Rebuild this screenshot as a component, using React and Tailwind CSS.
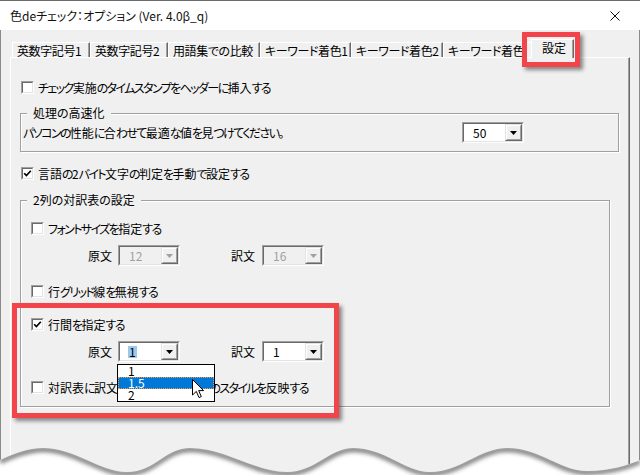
import React from 'react';

const FONT = "font-['Noto_Sans_CJK_JP','Liberation_Sans',sans-serif] [font-feature-settings:'palt']";

// MS UI Gothic draws kana narrower than Noto, so tighten only the kana runs
const KANA = /([\u3040-\u30ff\u3000-\u303f]+)/;
function Jp({ text }) {
  return text.split(KANA).map((part, i) =>
    KANA.test(part) ? (
      <span key={i} className="tracking-[-1.6px]">
        {part}
      </span>
    ) : (
      part
    )
  );
}

function CheckBox({ checked }) {
  return (
    <div className="w-[13px] h-[13px] shrink-0 border border-t-[#a0a0a0] border-l-[#a0a0a0] border-r-white border-b-white">
      <div className="w-full h-full bg-white border border-t-[#696969] border-l-[#696969] border-r-[#e3e3e3] border-b-[#e3e3e3] flex items-center justify-center">
        {checked && (
          <svg width="9" height="9" viewBox="0 0 9 9">
            <path d="M1.2 4.2 L3.4 6.6 L7.8 1.8" stroke="#000" strokeWidth="1.7" fill="none" />
          </svg>
        )}
      </div>
    </div>
  );
}

function CheckRow({ checked, label, className }) {
  return (
    <div className={`flex items-center gap-[4px] h-[13px] leading-[13px] ${className}`}>
      <CheckBox checked={checked} />
      <span className="whitespace-pre">
        <Jp text={label} />
      </span>
    </div>
  );
}

function Combo({ value, disabled, selected, children, className = '' }) {
  return (
    <div className={`relative w-[62px] h-[21px] shrink-0 border border-t-[#a0a0a0] border-l-[#a0a0a0] border-r-white border-b-white ${className}`}>
      <div
        className={`w-full h-full flex border border-t-[#696969] border-l-[#696969] border-r-[#e3e3e3] border-b-[#e3e3e3] ${
          disabled ? 'bg-[#f0f0f0]' : 'bg-white'
        }`}
      >
        <div className="flex-1 flex items-center pl-[8px]">
          <span
            className={`leading-[12px] px-[1px] ${disabled ? 'text-[#a0a0a0]' : 'text-black'} ${
              selected ? 'bg-[#99c9ef]' : ''
            }`}
          >
            {value}
          </span>
        </div>
        <div className="w-[17px] h-full border border-t-[#e3e3e3] border-l-[#e3e3e3] border-r-[#696969] border-b-[#696969]">
          <div className="w-full h-full bg-[#f0f0f0] border border-t-white border-l-white border-r-[#a0a0a0] border-b-[#a0a0a0] flex items-center justify-center">
            <svg width="7" height="4" viewBox="0 0 7 4">
              <path d="M0 0 H7 L3.5 4 Z" fill={disabled ? '#a0a0a0' : '#000'} />
            </svg>
          </div>
        </div>
      </div>
      {children}
    </div>
  );
}

function Tab({ label, w, clip }) {
  return (
    <div
      className="h-[15px] shrink-0 flex items-center pl-[4px] tracking-[-0.4px] border-t border-l border-white border-r border-r-[#696969] shadow-[inset_-1px_0_0_#a0a0a0] leading-[13px] whitespace-nowrap"
      style={{ width: w }}
    >
      {clip ? <span className="w-[75px] overflow-hidden">{label}</span> : label}
    </div>
  );
}

function Group({ legend, className, children }) {
  return (
    <div className={`border border-[#a0a0a0] shadow-[1px_1px_0_#fff,inset_1px_1px_0_#fff] ${className}`}>
      <div className="-mt-[8px] ml-[6px] px-[6px] w-fit h-[14px] leading-[14px] bg-[#f0f0f0]">{legend}</div>
      {children}
    </div>
  );
}

function RowPair({ left, right }) {
  return (
    <div className="flex items-center h-[21px]">
      <span className="ml-[67px] w-[24px] whitespace-nowrap">原文</span>
      <div className="ml-[6px]">{left}</div>
      <span className="ml-[51px] w-[24px] whitespace-nowrap">訳文</span>
      <div className="ml-[7px]">{right}</div>
    </div>
  );
}

export default function App() {
  return (
    <div className={`relative w-[640px] h-[475px] overflow-hidden bg-[#f0f0f0] text-[12px] text-black ${FONT}`}>
      {/* title bar */}
      <div className="h-[30px] bg-white border-t border-[#6b6b6b] flex items-center justify-between pl-[10px] pr-[20px]">
        <span className="text-[12px] leading-[14px] text-[#111]">色deチェック：オプション (Ver. 4.0β_q)</span>
        <svg width="10" height="10" viewBox="0 0 10 10">
          <path d="M0.5 0.5 L9.5 9.5 M9.5 0.5 L0.5 9.5" stroke="#111" strokeWidth="1" />
        </svg>
      </div>

      {/* body */}
      <div className="h-[445px] flex flex-col border-l border-r border-[#8a8a8a]">
        {/* tabs */}
        <div className="h-[27px] flex items-end pl-[11px]">
          <Tab label="英数字記号1" w={78} />
          <Tab label="英数字記号2" w={78} />
          <Tab label="用語集での比較" w={92} />
          <Tab label="キーワード着色1" w={91} />
          <Tab label="キーワード着色2" w={92} />
          <Tab label="キーワード着色3" w={90} clip />
          <div className="relative z-10 -mb-[1px] -ml-[2px] w-[43px] h-[19px] bg-[#f0f0f0] flex items-center pl-[10px] pb-[2px] border-t border-l border-white border-r border-r-[#696969] shadow-[inset_-1px_0_0_#a0a0a0]">
            設定
          </div>
        </div>

        {/* panel */}
        <div className="flex-1 ml-[9px] mr-[9px] border border-t-white border-l-white border-r-[#696969] border-b-[#696969] shadow-[inset_-1px_-1px_0_#a0a0a0]">
          <CheckRow label="チェック実施のタイムスタンプをヘッダーに挿入する" className="mt-[23px] ml-[10px]" />

          <Group legend="処理の高速化" className="mt-[19px] ml-[9px] w-[599px] pb-[8px]">
            <div className="flex items-center mt-[2px]">
              <span className="pl-[2px] whitespace-nowrap">
                <Jp text="パソコンの性能に合わせて最適な値を見つけてください。" />
              </span>
              <Combo value="50" className="ml-auto mr-[94px]" />
            </div>
          </Group>

          <CheckRow checked label="言語の2バイト文字の判定を手動で設定する" className="mt-[15px] ml-[10px]" />

          <Group legend="2列の対訳表の設定" className="mt-[20px] ml-[9px] w-[590px] pb-[12px]">
            <CheckRow label="フォントサイズを指定する" className="mt-[15px] ml-[10px]" />
            <div className="mt-[10px]">
              <RowPair left={<Combo value="12" disabled />} right={<Combo value="16" disabled />} />
            </div>
            <CheckRow label="行グリッド線を無視する" className="mt-[19px] ml-[10px]" />
            <CheckRow checked label="行間を指定する" className="mt-[20px] ml-[10px]" />
            <div className="mt-[10px] relative z-20">
              <RowPair
                left={
                  <Combo value="1" selected>
                    <div className="absolute left-[-2px] top-[22px] w-[98px] h-[38px] bg-white border border-black">
                      <div className="h-[12px] leading-[12px] pl-[10px]">1</div>
                      <div className="h-[12px] leading-[10px] pl-[9px] bg-[#0078d7] text-white border border-dotted border-[#f39a3c]">1.5</div>
                      <div className="h-[12px] leading-[12px] pl-[10px]">2</div>
                    </div>
                  </Combo>
                }
                right={<Combo value="1" />}
              />
            </div>
            <CheckRow label="対訳表に訳文ファイル内の表セル のスタイルを反映する" className="mt-[19px] ml-[10px]" />
          </Group>
        </div>
      </div>

      {/* annotation boxes */}
      <div className="absolute left-[522px] top-[32px] w-[58px] h-[35px] border-[5px] border-[#f2444b] shadow-[3px_3px_4px_rgba(0,0,0,0.45)] z-30" />
      <div className="absolute left-[12px] top-[303px] w-[327px] h-[115px] border-[5px] border-[#f2444b] shadow-[3px_3px_4px_rgba(0,0,0,0.45)] z-10" />

      {/* mouse cursor */}
      <svg className="absolute left-[192px] top-[379px] z-40" width="13" height="20" viewBox="0 0 13 20">
        <path
          d="M0.5 0.5 L0.5 16 L4.3 12.4 L7 18.6 L9.3 17.6 L6.7 11.6 L11.6 11.6 Z"
          fill="#fff"
          stroke="#000"
          strokeWidth="1"
          strokeLinejoin="round"
        />
      </svg>

      {/* torn bottom edge */}
      <svg className="absolute left-0 bottom-0 z-50" width="640" height="32" viewBox="0 443 640 32">
        <defs>
          <clipPath id="paper">
            <path d="M0 460 C15 453 28 448 43 448 C75 448 100 472 127 472 C155 472 165 448 190 448 C225 448 255 472 287 472 C315 472 330 448 353 448 C385 448 405 472 430 472 C460 472 480 448 507 448 C540 448 560 471 587 471 C610 471 628 465 640 460 L640 475 L0 475 Z" />
          </clipPath>
          <filter id="soft" x="-10%" y="-50%" width="120%" height="200%">
            <feGaussianBlur stdDeviation="2.2" />
          </filter>
        </defs>
        <path
          d="M0 460 C15 453 28 448 43 448 C75 448 100 472 127 472 C155 472 165 448 190 448 C225 448 255 472 287 472 C315 472 330 448 353 448 C385 448 405 472 430 472 C460 472 480 448 507 448 C540 448 560 471 587 471 C610 471 628 465 640 460 L640 475 L0 475 Z"
          fill="#fff"
        />
        <g clipPath="url(#paper)">
          <path
            d="M0 460 C15 453 28 448 43 448 C75 448 100 472 127 472 C155 472 165 448 190 448 C225 448 255 472 287 472 C315 472 330 448 353 448 C385 448 405 472 430 472 C460 472 480 448 507 448 C540 448 560 471 587 471 C610 471 628 465 640 460"
            transform="translate(0 1.5)"
            stroke="#7a7a7a"
            strokeWidth="5"
            fill="none"
            filter="url(#soft)"
          />
        </g>
      </svg>
    </div>
  );
}
